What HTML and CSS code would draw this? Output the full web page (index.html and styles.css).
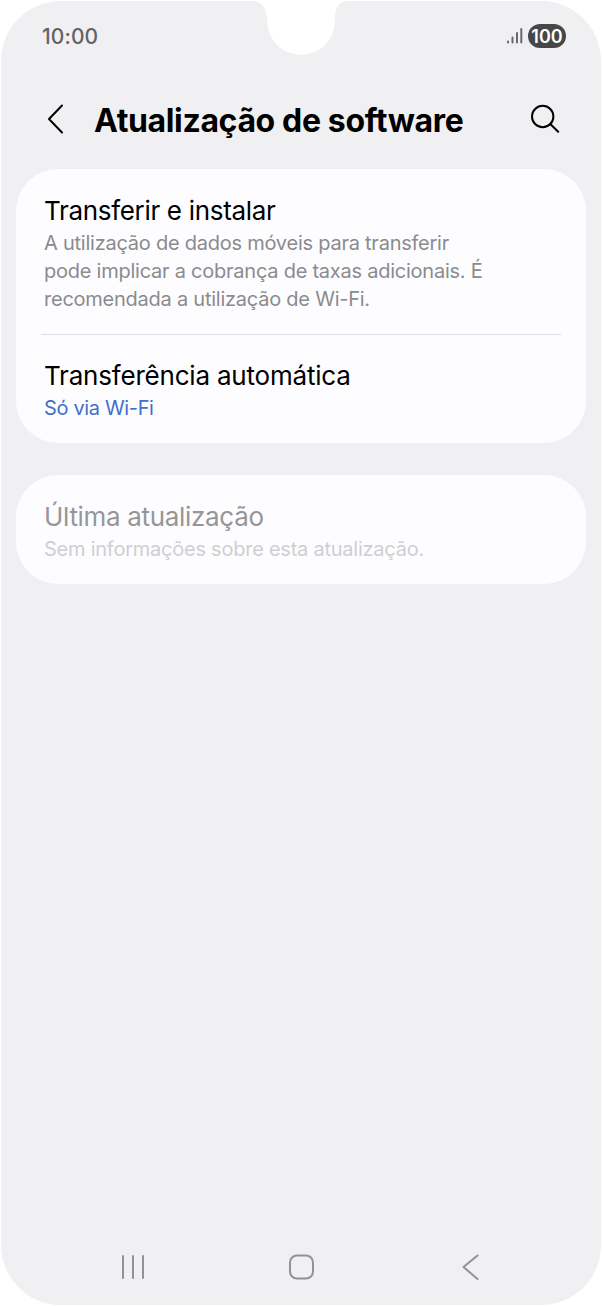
FILE: index.html
```html
<!DOCTYPE html>
<html lang="pt">
<head>
<meta charset="utf-8">
<title>Atualização de software</title>
<link rel="stylesheet" href="styles.css">
</head>
<body>
<div class="screen">
  <svg class="notch" width="102" height="56" viewBox="0 0 102 56"><path d="M2 0V1C12 1 15 8 16.500 15C17.500 20 17 24 18.500 30C23 46 36 54.500 51 54.500S79 46 83.500 30C85 24 84.500 18 85.500 12C86.500 5 91 1 98 1V0Z" fill="#fff"/></svg>
  <header class="status">
    <span class="time">10:00</span>
    <span class="indicators">
      <svg class="signal" width="18" height="18" viewBox="0 0 18 18" fill="none" stroke="#69696b" stroke-width="2" stroke-linecap="round"><path d="M2 15.500V14.500M6.500 15.500V10.500M11 15.500V6M15.300 15.500V2"/></svg>
      <span class="battery"><span class="level">100</span></span>
    </span>
  </header>
  <div class="titlebar">
    <svg class="back" width="20" height="32" viewBox="0 0 20 32" fill="none" stroke="#000" stroke-width="2" stroke-linecap="round" stroke-linejoin="round"><path d="M17 2.500L4 16L17 29.500"/></svg>
    <h1><span class="heading">Atualização de software</span></h1>
    <svg class="search" width="32" height="32" viewBox="0 0 32 32" fill="none" stroke="#000" stroke-width="2" stroke-linecap="round"><circle cx="13.700" cy="13.500" r="10.700"/><path d="M21.300 21L29.200 28.700"/></svg>
  </div>
  <main>
    <section class="card">
      <div class="item">
        <h2><span class="t1">Transferir e instalar</span></h2>
        <p><span class="l1">A utilização de dados móveis para transferir</span><br><span class="l2">pode implicar a cobrança de taxas adicionais. É</span><br><span class="l3">recomendada a utilização de Wi-Fi.</span></p>
      </div>
      <div class="rule"></div>
      <div class="item second">
        <h2><span class="t2">Transferência automática</span></h2>
        <p class="link"><span class="l4">Só via Wi-Fi</span></p>
      </div>
    </section>
    <section class="card disabled">
      <div class="item">
        <h2><span class="t3">Última atualização</span></h2>
        <p><span class="l5">Sem informações sobre esta atualização.</span></p>
      </div>
    </section>
  </main>
  <nav class="navbar">
    <svg width="28" height="28" viewBox="0 0 28 28" fill="none" stroke="#929294" stroke-width="2" stroke-linecap="round"><path d="M5 3V25M15 3V25M25 3V25"/></svg>
    <svg width="28" height="28" viewBox="0 0 28 28" fill="none" stroke="#929294" stroke-width="2"><rect x="3" y="2.500" width="23" height="23" rx="7"/></svg>
    <svg width="28" height="28" viewBox="0 0 28 28" fill="none" stroke="#929294" stroke-width="2" stroke-linecap="round" stroke-linejoin="round"><path d="M21.500 2.500L7.500 14L21.500 26"/></svg>
  </nav>
</div>
</body>
</html>
```
FILE: styles.css
```css
* { box-sizing: border-box; }
body { margin: 0; background: #fff; font-family: Inter, "Liberation Sans", sans-serif; }
.screen { position: relative; width: 600px; height: 1304px; margin: 1px; background: #f0f0f2; border-radius: 60px; display: flex; flex-direction: column; }
.notch { position: absolute; left: 249px; top: -1px; }
.status { height: 70px; padding: 0 35px 0 41px; display: flex; justify-content: space-between; align-items: center; }
.time { color: #636365; font-size: 21px; font-weight: 500; letter-spacing: 0.1px; white-space: nowrap; }
.indicators { display: flex; align-items: center; gap: 4px; }
.battery { width: 38px; height: 24px; border-radius: 12px; background: #474747; color: #fff; font-size: 18px; font-weight: 600; display: flex; align-items: center; justify-content: center; }
.titlebar { height: 98px; padding: 0 40px 0 44px; display: flex; align-items: center; }
.back, .search { margin-bottom: 2px; }
h1 { flex: 1; margin: 1px 0 0 29px; font-size: 32px; line-height: 41px; font-weight: 700; letter-spacing: -0.36px; color: #000; }
main { flex: 1; padding: 0 15px; display: flex; flex-direction: column; gap: 32px; }
.card { background: #fdfdff; border-radius: 42px; padding: 24px 25px 0; height: 274px; }
.item { padding-left: 3px; }
h2 { margin: 0; font-size: 26px; line-height: 35px; font-weight: 400; color: #000; white-space: nowrap; }
.t1, .t3 { letter-spacing: -0.32px; }
.t2 { letter-spacing: -0.2px; }
p { margin: 1px 0 0; font-size: 20px; line-height: 28px; letter-spacing: -0.24px; color: #8b8b8d; white-space: nowrap; }
.rule { height: 1px; margin-top: 21px; border-bottom: 0; background: #dededf; }
.second { padding-top: 23px; }
.link { color: #416fca; letter-spacing: -0.35px; }
.disabled { height: 109px; }
.disabled h2 { color: #969698; }
.disabled p { color: #cfcfd1; }
.navbar { height: 76px; padding: 0 117px; display: flex; justify-content: space-between; align-items: center; }
```
